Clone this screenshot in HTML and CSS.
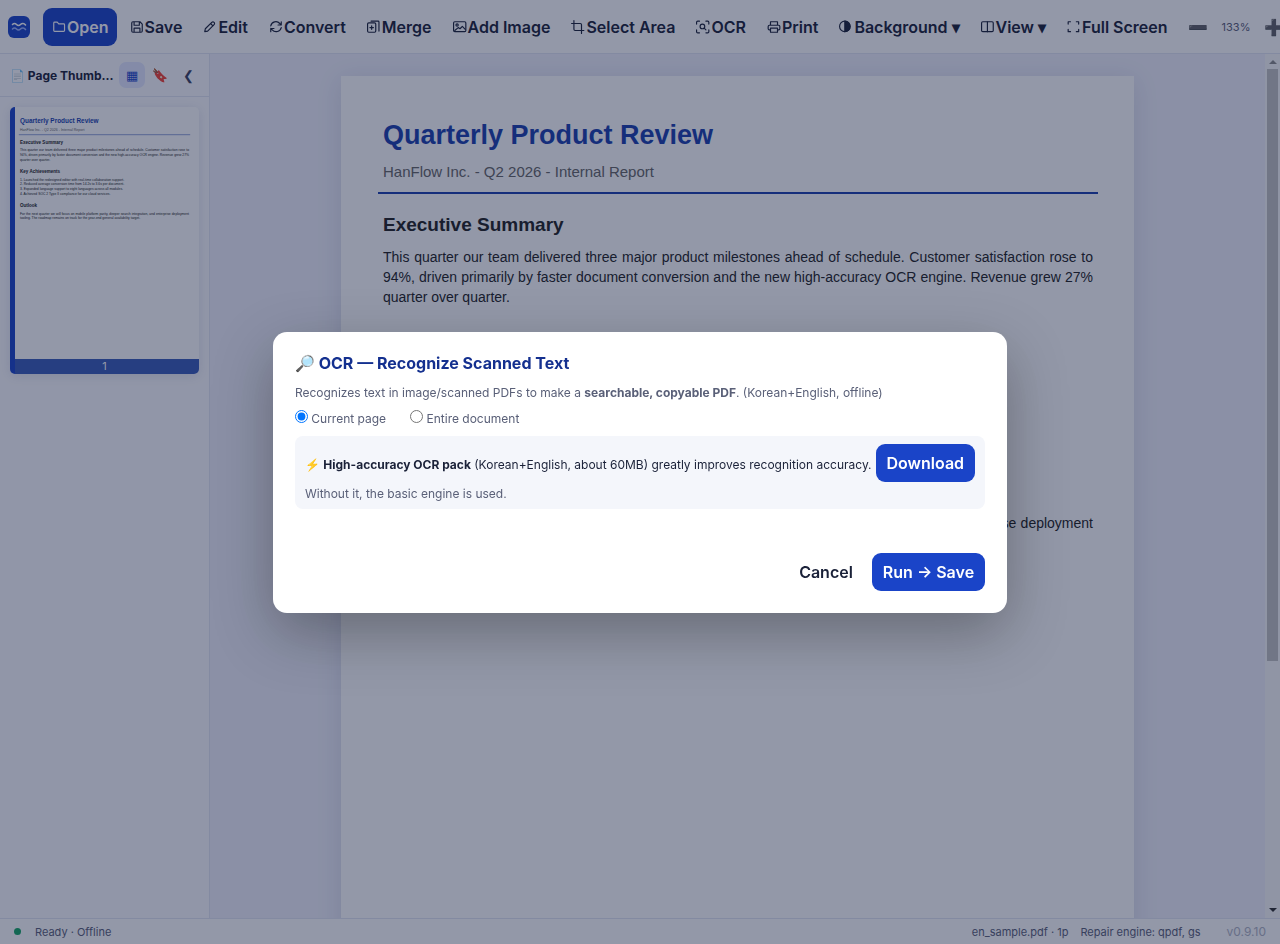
FILE: index.html
```html
<!DOCTYPE html>
<html lang="en">
<head>
  <meta charset="UTF-8">
  <meta name="viewport" content="width=device-width, initial-scale=1.0">
  <title>HanFlow PDF</title>
  <link rel="stylesheet" href="styles.css">
</head>
<body>
  <header class="toolbar">
    <svg class="logo" viewBox="0 0 22 22"><rect width="22" height="22" rx="6" fill="#1a44c8"/><path d="M4.500 8.500C6 7 7 7 8.500 8.500s2.500 1.500 4 0 3.500-1.500 5 .5" fill="none" stroke="#fff" stroke-width="1.600" stroke-linecap="round"/><path d="M4.500 13C6 11.500 7 11.500 8.500 13s2.500 1.500 4 0 3.500-1.500 5 .5" fill="none" stroke="#9db4ff" stroke-width="1.600" stroke-linecap="round"/></svg>
    <button class="btn primary"><svg class="icon" viewBox="0 0 24 24"><path d="M3 5a1.500 1.500 0 0 1 1.500-1.500H9L11.500 6.500H20A1.500 1.500 0 0 1 21.500 8v10A1.500 1.500 0 0 1 20 19.500H4.500A1.500 1.500 0 0 1 3 18z"/></svg>Open</button>
    <button class="btn"><svg class="icon" viewBox="0 0 24 24"><path d="M5 3h12l4 4v12a2 2 0 0 1-2 2H5a2 2 0 0 1-2-2V5a2 2 0 0 1 2-2zM7 3v6h9V3M7 21v-7h10v7"/></svg>Save</button>
    <button class="btn"><svg class="icon" viewBox="0 0 24 24"><path d="M3 20l1-5L15 4a2.500 2.500 0 0 1 4 4L8 19zM13 6l4 4"/></svg>Edit</button>
    <button class="btn"><svg class="icon" viewBox="0 0 24 24"><path d="M3 10a9 9 0 0 1 15.500-4L21 8.500M21 3v5.500h-5.500M21 13a9 9 0 0 1-15.500 4L3 14.500M3 20v-5.500h5.500"/></svg>Convert</button>
    <button class="btn"><svg class="icon" viewBox="0 0 24 24"><rect x="1" y="5" width="14" height="16" rx="2"/><path d="M7 2h12a1.500 1.500 0 0 1 1.500 1.500V19M8 10v6M5 13h6"/></svg>Merge</button>
    <button class="btn"><svg class="icon" viewBox="0 0 24 24"><rect x="1" y="3" width="21" height="17" rx="2"/><circle cx="7" cy="8.500" r="2"/><path d="M3 18l6-5 3 2 4-4 5 5"/></svg>Add Image</button>
    <button class="btn"><svg class="icon" viewBox="0 0 24 24"><path d="M5 1v15a2 2 0 0 0 2 2h15M1 6h15a2 2 0 0 1 2 2v15"/></svg>Select Area</button>
    <button class="btn"><svg class="icon" viewBox="0 0 24 24"><path d="M1 7V4a2 2 0 0 1 2-2h3M17 2h3a2 2 0 0 1 2 2v3M22 17v3a2 2 0 0 1-2 2h-3M6 22H3a2 2 0 0 1-2-2v-3"/><circle cx="11" cy="11" r="4"/><path d="M14 14l3 3"/></svg>OCR</button>
    <button class="btn"><svg class="icon" viewBox="0 0 24 24"><path d="M6 9V3h12v6M6 17H4a2 2 0 0 1-2-2v-4a2 2 0 0 1 2-2h16a2 2 0 0 1 2 2v4a2 2 0 0 1-2 2h-2"/><rect x="6" y="14" width="12" height="7"/></svg>Print</button>
    <button class="btn"><svg class="icon" viewBox="0 0 24 24"><circle cx="10" cy="11" r="9"/><path class="solid" d="M10 2a9 9 0 0 1 0 18z"/></svg>Background ▾</button>
    <button class="btn"><svg class="icon" viewBox="0 0 24 24"><rect x="1" y="3" width="20" height="17" rx="2"/><path d="M11 3v17"/></svg>View ▾</button>
    <button class="btn"><svg class="icon" viewBox="0 0 24 24"><path d="M2 7V3h4M16 3h4v4M20 16v4h-4M6 20H2v-4"/></svg>Full Screen</button>
    <button class="btn" aria-label="Zoom out">➖</button>
    <span class="zoom-level">133%</span>
    <button class="btn" aria-label="Zoom in">➕</button>
  </header>

  <div class="workspace">
    <aside class="sidebar">
      <div class="side-head">
        <span class="side-title">📄 Page Thumbnails</span>
        <button class="side-btn active" aria-label="Thumbnails">▦</button>
        <button class="side-btn" aria-label="Bookmarks">🔖</button>
        <button class="side-btn" aria-label="Collapse">❮</button>
      </div>
      <div class="thumb">
        <svg class="thumb-page" viewBox="0 0 794 1123">
          <foreignObject width="794" height="1123">
            <article class="paper">
              <h1>Quarterly Product Review</h1>
              <p class="byline">HanFlow Inc. - Q2 2026 - Internal Report</p>
              <hr>
              <h2>Executive Summary</h2>
              <p>This quarter our team delivered three major product milestones ahead of schedule. Customer satisfaction rose to 94%, driven primarily by faster document conversion and the new high-accuracy OCR engine. Revenue grew 27% quarter over quarter.</p>
              <h2>Key Achievements</h2>
              <p>1. Launched the redesigned editor with real-time collaboration support.<br>2. Reduced average conversion time from 14.2s to 3.6s per document.<br>3. Expanded language support to eight languages across all modules.<br>4. Achieved SOC 2 Type II compliance for our cloud services.</p>
              <h2>Outlook</h2>
              <p>For the next quarter we will focus on mobile platform parity, deeper search integration, and enterprise deployment tooling. The roadmap remains on track for the year-end general availability target.</p>
            </article>
          </foreignObject>
        </svg>
        <span class="thumb-number">1</span>
      </div>
    </aside>

    <main class="viewer">
      <article class="paper sheet">
        <h1>Quarterly Product Review</h1>
        <p class="byline">HanFlow Inc. - Q2 2026 - Internal Report</p>
        <hr>
        <h2>Executive Summary</h2>
        <p>This quarter our team delivered three major product milestones ahead of schedule. Customer satisfaction rose to 94%, driven primarily by faster document conversion and the new high-accuracy OCR engine. Revenue grew 27% quarter over quarter.</p>
        <h2>Key Achievements</h2>
        <p>1. Launched the redesigned editor with real-time collaboration support.<br>2. Reduced average conversion time from 14.2s to 3.6s per document.<br>3. Expanded language support to eight languages across all modules.<br>4. Achieved SOC 2 Type II compliance for our cloud services.</p>
        <h2>Outlook</h2>
        <p>For the next quarter we will focus on mobile platform parity, deeper search integration, and enterprise deployment tooling. The roadmap remains on track for the year-end general availability target.</p>
      </article>
    </main>
    <div class="scrollbar">
      <span class="arrow up"></span>
      <div class="track"><div class="handle"></div></div>
      <span class="arrow down"></span>
    </div>
  </div>

  <footer class="statusbar">
    <span class="dot"></span>
    <span>Ready · Offline</span>
    <span class="file-info">en_sample.pdf · 1p</span>
    <span>Repair engine: qpdf, gs</span>
    <span class="version">v0.9.10</span>
  </footer>

  <div class="overlay">
    <div class="modal" role="dialog" aria-labelledby="ocr-title">
      <h3 id="ocr-title">🔎 OCR — Recognize Scanned Text</h3>
      <p class="desc">Recognizes text in image/scanned PDFs to make a <b>searchable, copyable PDF</b>. (Korean+English, offline)</p>
      <div class="scope">
        <label><input type="radio" name="scope" checked> Current page</label>
        <label><input type="radio" name="scope"> Entire document</label>
      </div>
      <div class="pack">
        <div class="pack-row">
          <span>⚡ <b>High-accuracy OCR pack</b> (Korean+English, about 60MB) greatly improves recognition accuracy.</span>
          <button class="btn primary">Download</button>
        </div>
        <p class="pack-note">Without it, the basic engine is used.</p>
      </div>
      <div class="actions">
        <button class="btn">Cancel</button>
        <button class="btn primary">Run → Save</button>
      </div>
    </div>
  </div>
</body>
</html>
```
FILE: styles.css
```css
* {
  box-sizing: border-box;
}
body {
  margin: 0;
  height: 100vh;
  display: flex;
  flex-direction: column;
  overflow: hidden;
  font-family: Inter, "Noto Sans", sans-serif;
  color: #1a2138;
  background: #fff;
}
button {
  font-family: inherit;
  cursor: pointer;
}

/* toolbar */
.toolbar {
  display: flex;
  align-items: center;
  gap: 4px;
  padding: 8px 8px 7px;
  background: #fff;
  border-bottom: 1px solid #e2e5f2;
  overflow: hidden;
}
.logo {
  width: 22px;
  height: 22px;
  margin-right: 9px;
  flex-shrink: 0;
}
.btn {
  display: flex;
  align-items: center;
  flex-shrink: 0;
  height: 38px;
  padding: 0 8px;
  border: none;
  border-radius: 9px;
  background: none;
  color: #1a2138;
  font-size: 16px;
  font-weight: 600;
  white-space: nowrap;
}
.btn.primary {
  background: #1a44c8;
  color: #fff;
}
.icon {
  width: 16px;
  height: 16px;
  padding: 1px;
  fill: none;
  stroke: currentColor;
  stroke-width: 2;
  stroke-linecap: round;
  stroke-linejoin: round;
  overflow: visible;
}
.icon .solid {
  fill: currentColor;
}
.zoom-level {
  flex-shrink: 0;
  padding: 0 2px;
  text-align: center;
  font-size: 11px;
  color: #5a6078;
}

/* sidebar and page area */
.workspace {
  flex: 1;
  min-height: 0;
  display: flex;
}
.sidebar {
  width: 210px;
  flex-shrink: 0;
  background: #fcfcff;
  border-right: 1px solid #e2e5f2;
}
.side-head {
  display: flex;
  align-items: center;
  gap: 2px;
  height: 43px;
  padding: 0 8px 0 10px;
  border-bottom: 1px solid #e2e5f2;
}
.side-title {
  flex: 1;
  overflow: hidden;
  text-overflow: ellipsis;
  white-space: nowrap;
  font-size: 12px;
  font-weight: 700;
}
.side-btn {
  width: 26px;
  height: 26px;
  padding: 0;
  border: none;
  border-radius: 7px;
  background: none;
  color: #3a4060;
  font-size: 13px;
}
.side-btn.active {
  background: #e4e8ff;
  color: #1a44c8;
}
.thumb {
  position: relative;
  margin: 10px;
  border-left: 5px solid #1a44c8;
  border-radius: 5px;
  overflow: hidden;
  box-shadow: 0 2px 12px rgba(30, 40, 100, 0.12);
  background: #fff;
}
.thumb-page {
  display: block;
  width: calc(100% + 5px);
  margin-left: -5px;
}
.thumb-number {
  position: absolute;
  left: 0;
  right: 0;
  bottom: 0;
  padding-right: 5px;
  background: #3a5bb8;
  color: #fff;
  font-size: 11px;
  line-height: 15px;
  text-align: center;
}
.viewer {
  flex: 1;
  min-width: 0;
  overflow: hidden;
  padding: 22px;
  background: #f0f1fb;
}
.scrollbar {
  display: flex;
  flex-direction: column;
  align-items: center;
  width: 15px;
  padding: 6px 0;
  background: #fafafa;
}
.arrow {
  border: 4px solid transparent;
}
.arrow.up {
  border-top: none;
  border-bottom-color: #8b8b8b;
}
.arrow.down {
  border-bottom: none;
  border-top-color: #303030;
}
.track {
  flex: 1;
  width: 11px;
  margin: 5px 0;
}
.handle {
  height: 71%;
  background: #c1c1c1;
}

/* the PDF page */
.paper {
  width: 793px;
  height: 1123px;
  padding: 42px 41px 0 42px;
  background: #fff;
  color: #222;
  font-family: "Liberation Sans", Arial, sans-serif;
  font-size: 14px;
  line-height: 20px;
}
.sheet {
  margin: 0 auto 40px;
  box-shadow: 0 4px 24px rgba(30, 40, 100, 0.12);
}
.paper h1 {
  margin: 0;
  font-size: 27px;
  line-height: 34px;
  color: #1a3fae;
}
.paper p {
  margin: 0;
  text-align: justify;
}
.paper .byline {
  margin-top: 10px;
  font-size: 15px;
  color: #666;
}
.paper hr {
  margin: 10px -5px 19px;
  border: none;
  border-top: 2px solid #1a3fae;
}
.paper h2 {
  margin: 29px 0 10px;
  font-size: 19px;
  line-height: 24px;
}
.paper hr + h2 {
  margin-top: 0;
}

/* status bar */
.statusbar {
  display: flex;
  align-items: center;
  height: 26px;
  padding: 0 14px;
  border-top: 1px solid #e2e5f2;
  background: #fff;
  font-size: 11px;
  color: #5a6078;
}
.dot {
  width: 7px;
  height: 7px;
  margin-right: 14px;
  border-radius: 50%;
  background: #16a765;
}
.file-info {
  margin: 0 12px 0 auto;
}
.version {
  margin-left: 26px;
  font-size: 12px;
  color: #b0b4c4;
}

/* dialog */
.overlay {
  position: fixed;
  inset: 0;
  display: flex;
  align-items: center;
  justify-content: center;
  background: rgba(15, 27, 61, 0.45);
}
.modal {
  padding: 22px;
  border-radius: 14px;
  background: #fff;
  box-shadow: 0 20px 60px rgba(0, 0, 0, 0.3);
}
.modal h3 {
  margin: 0 0 12px;
  font-size: 16px;
  line-height: 18px;
  color: #14308f;
}
.desc {
  margin: 0 0 8px;
  font-size: 12px;
  line-height: 18px;
  color: #5a6078;
}
.scope {
  display: flex;
  gap: 24px;
  margin-bottom: 8px;
  font-size: 12px;
  line-height: 18px;
  color: #5a6078;
}
.scope input {
  margin: 0;
}
.pack {
  padding: 8px 10px;
  border-radius: 8px;
  background: #f4f6fb;
  font-size: 12px;
}
.pack-row {
  display: flex;
  align-items: baseline;
  justify-content: space-between;
  gap: 4px;
  white-space: nowrap;
}
.pack .btn,
.actions .btn {
  padding: 0 11px;
}
.pack-note {
  margin: 4px 0 0;
  line-height: 15px;
  color: #5a6078;
}
.actions {
  display: flex;
  justify-content: flex-end;
  gap: 8px;
  margin-top: 44px;
}
```
